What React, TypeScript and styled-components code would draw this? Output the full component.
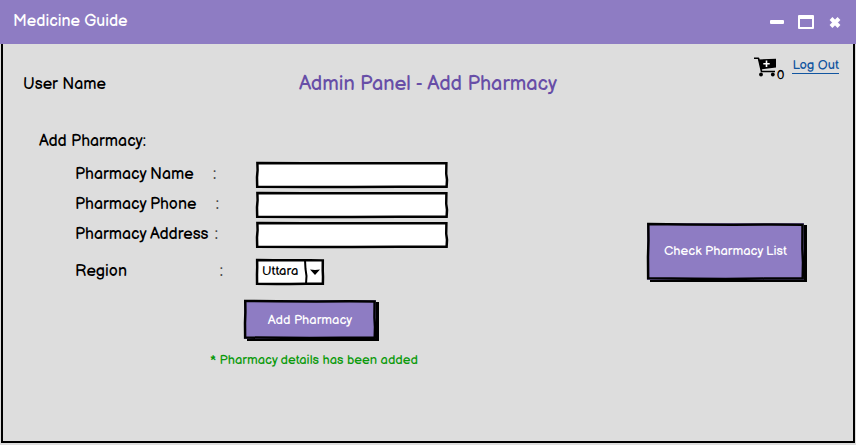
import React from "react";
import styled, { createGlobalStyle } from "styled-components";

const GlobalStyle = createGlobalStyle`
  * { box-sizing: border-box; }
  body {
    margin: 0;
    background: #dddddd;
    color: #000;
    font-family: "Balsamiq Sans", Inter, sans-serif;
    font-size: 16px;
    line-height: 20px;
  }
  button, input, select { font: inherit; }
`;

const Window = styled.div`
  display: flex;
  flex-direction: column;
  min-height: 100vh;
`;

const TitleBar = styled.header`
  display: flex;
  align-items: center;
  justify-content: space-between;
  height: 44px;
  padding: 0 13px;
  background: #8e7cc3;
  color: #fff;
  line-height: 22px;
`;

const WindowControls = styled.div`
  display: flex;
  gap: 12px;
`;

const ControlButton = styled.button`
  display: flex;
  padding: 0;
  border: 0;
  background: none;
  color: inherit;
`;

const Content = styled.main`
  flex: 1;
  margin: 0 1px 2px;
  border: solid #000;
  border-width: 0 2px 2px;
`;

const TopRow = styled.div`
  display: grid;
  grid-template-columns: 1fr auto 1fr;
  align-items: start;
  padding: 12px 14px 0;
`;

const UserName = styled.span`
  padding: 19px 0 0 6px;
`;

const Heading = styled.h1`
  margin: 0;
  padding-top: 16px;
  color: #674ea7;
  font-size: 20px;
  font-weight: 400;
  line-height: 24px;
`;

const Account = styled.div`
  display: flex;
  justify-content: flex-end;
  align-items: flex-start;
`;

const CartCount = styled.span`
  margin-right: 8px;
  padding-top: 9px;
  font-size: 13px;
`;

const LogOut = styled.a`
  margin-top: 2px;
  border-bottom: 1px solid #1155a0;
  color: #1155a0;
  font-size: 13px;
  line-height: 15px;
  text-decoration: none;
`;

const Workspace = styled.div`
  display: flex;
  align-items: center;
  justify-content: space-between;
  padding: 36px 49px 0 36px;
`;

const SectionTitle = styled.h2`
  margin: 0 0 10px;
  font-size: 16px;
  font-weight: 400;
  line-height: 20px;
`;

const Fields = styled.div`
  display: grid;
  grid-template-columns: 181px 192px;
  row-gap: 4px;
  padding-left: 36px;
`;

const Label = styled.label<{ $apart?: boolean }>`
  align-self: center;
  margin-top: ${(p) => (p.$apart ? "6px" : "0")};
  white-space: pre;
`;

const Colon = styled.span`
  padding-left: 2px;
  color: #444;
`;

const Sketched = styled.div<{ $apart?: boolean }>`
  position: relative;
  display: flex;
  justify-self: start;
  width: ${(p) => (p.$apart ? "68px" : "100%")};
  height: 26px;
  margin-top: ${(p) => (p.$apart ? "7px" : "0")};
`;

const Outline = styled.svg`
  position: absolute;
  top: 1px;
  left: 1px;
  width: calc(100% - 2px);
  height: calc(100% - 2px);
  overflow: visible;
  pointer-events: none;
  fill: none;
  stroke: #000;
  stroke-width: 2.5;
  stroke-linejoin: miter;
  path { vector-effect: non-scaling-stroke; }
`;

const TextField = styled.input`
  width: 100%;
  padding: 0 8px;
  border: 0;
  outline: 0;
  background: #fff;
`;

const Select = styled.select`
  width: 100%;
  padding: 0 0 2px 6px;
  border: 0;
  border-radius: 3px;
  outline: 0;
  appearance: none;
  background: #fff;
  color: #000;
  font-size: 13px;
`;

const Arrow = styled.svg`
  position: absolute;
  top: 1px;
  right: 0;
  width: 20px;
  height: 24px;
  pointer-events: none;
`;

const SketchButton = styled.button<{ $large?: boolean }>`
  position: relative;
  width: ${(p) => (p.$large ? "157px" : "132px")};
  height: ${(p) => (p.$large ? "57px" : "39px")};
  padding: 0;
  border: 0;
  background: #8e7cc3;
  box-shadow: 3px 2px 0 #000;
  color: #fff;
  font-size: 13px;
`;

const SubmitRow = styled.div`
  padding: 15px 0 0 205px;
`;

const Status = styled.p`
  margin: 11px 0 0 171px;
  color: #0b9a0b;
  font-size: 13px;
  line-height: 20px;
`;

function Frame() {
  return (
    <Outline viewBox="0 0 100 100" preserveAspectRatio="none" aria-hidden="true">
      <path d="M.2 0 L25 .8 L55 1.5 L80 .8 L99.7 1.5 L99.6 45 L100 70 L99.8 99 L75 99.3 L50 100 L30 99.6 L.1 98.8 L0 60 L.3 30 Z" />
    </Outline>
  );
}

const textFields = [
  { id: "name", label: "Pharmacy Name    " },
  { id: "phone", label: "Pharmacy Phone    " },
  { id: "address", label: "Pharmacy Address " },
];

export default function App() {
  return (
    <Window>
      <GlobalStyle />
      <TitleBar>
        <span>Medicine Guide</span>
        <WindowControls>
          <ControlButton aria-label="Minimize">
            <svg width="16" height="16" viewBox="0 0 16 16">
              <rect x="1" y="6" width="14" height="4" rx="1" fill="currentColor" />
            </svg>
          </ControlButton>
          <ControlButton aria-label="Maximize">
            <svg width="18" height="16" viewBox="0 0 18 16">
              <path fillRule="evenodd" fill="currentColor" d="M2 1H16Q17 1 17 2V14Q17 15 16 15H2Q1 15 1 14V2Q1 1 2 1ZM3 5V13H15V5Z" />
            </svg>
          </ControlButton>
          <ControlButton aria-label="Close">
            <svg width="16" height="16" viewBox="0 0 16 16">
              <path d="M4 4.5 12 12.5M12 4.5 4 12.5" stroke="currentColor" strokeWidth="4" />
            </svg>
          </ControlButton>
        </WindowControls>
      </TitleBar>
      <Content>
        <TopRow>
          <UserName>User Name</UserName>
          <Heading>Admin Panel - Add Pharmacy</Heading>
          <Account>
            <svg width="23" height="22" viewBox="0 0 23 22" role="img" aria-label="Cart">
              <path d="M0 2.2H4.5L7.5 15.5H21" fill="none" stroke="#000" strokeWidth="1.6" strokeLinejoin="round" />
              <path d="M4.5 3.4 22 2.8V11.4L7 13.4Z" fill="#000" />
              <path d="M12.5 4.5V11M9.3 7.7H15.7" stroke="#fff" strokeWidth="1.6" />
              <circle cx="7" cy="18.5" r="1.9" />
              <circle cx="18.8" cy="18.5" r="1.9" />
            </svg>
            <CartCount>0</CartCount>
            <LogOut href="#logout">Log Out</LogOut>
          </Account>
        </TopRow>
        <Workspace>
          <form onSubmit={(e) => e.preventDefault()}>
            <SectionTitle>Add Pharmacy:</SectionTitle>
            <Fields>
              {textFields.map((f) => (
                <React.Fragment key={f.id}>
                  <Label htmlFor={f.id}>{f.label}<Colon>:</Colon></Label>
                  <Sketched>
                    <TextField id={f.id} type="text" />
                    <Frame />
                  </Sketched>
                </React.Fragment>
              ))}
              <Label htmlFor="region" $apart>{"Region" + " ".repeat(21)}<Colon>:</Colon></Label>
              <Sketched $apart>
                <Select id="region" defaultValue="Uttara">
                  <option>Uttara</option>
                </Select>
                <Frame />
                <Arrow viewBox="0 0 20 24" aria-hidden="true">
                  <path d="M1 0 1.5 9 2.5 16 2 24" fill="none" stroke="#000" strokeWidth="2" />
                  <path d="M6 9.5 11 10 16 9.5 11 15Z" />
                </Arrow>
              </Sketched>
            </Fields>
            <SubmitRow>
              <SketchButton type="submit">
                Add Pharmacy
                <Frame />
              </SketchButton>
            </SubmitRow>
            <Status role="status">* Pharmacy details has been added</Status>
          </form>
          <SketchButton type="button" $large>
            Check Pharmacy List
            <Frame />
          </SketchButton>
        </Workspace>
      </Content>
    </Window>
  );
}
